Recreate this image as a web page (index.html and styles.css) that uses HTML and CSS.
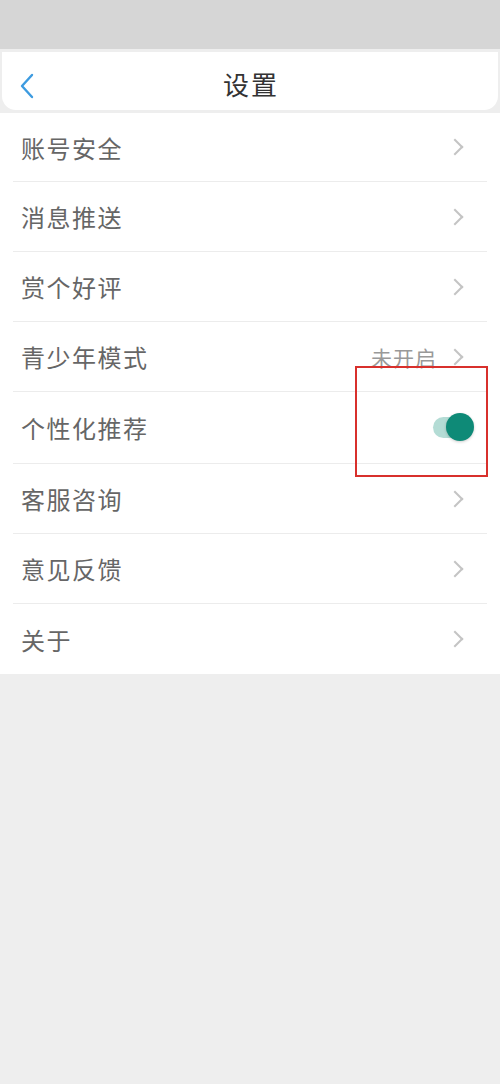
FILE: index.html
```html
<!DOCTYPE html>
<html lang="zh">
<head>
<meta charset="utf-8">
<title>设置</title>
<link rel="stylesheet" href="styles.css">
</head>
<body>
<div class="status"></div>
<header class="nav">
  <svg class="back" width="14" height="26" viewBox="0 0 14 26"><path d="M12 2 L2 13 L12 24" fill="none" stroke="#3d9be0" stroke-width="2.4" stroke-linecap="round" stroke-linejoin="round"/></svg>
  <h1 class="title">设置</h1>
</header>
<ul class="list">
  <li class="row"><span class="label">账号安全</span><span class="arrow"></span></li>
  <li class="row"><span class="label">消息推送</span><span class="arrow"></span></li>
  <li class="row"><span class="label">赏个好评</span><span class="arrow"></span></li>
  <li class="row"><span class="label">青少年模式</span><span class="right"><span class="value">未开启</span><span class="arrow"></span></span></li>
  <li class="row row-tall"><span class="label">个性化推荐</span><span class="switch"><span class="knob"></span></span><span class="mark"></span></li>
  <li class="row"><span class="label">客服咨询</span><span class="arrow"></span></li>
  <li class="row"><span class="label">意见反馈</span><span class="arrow"></span></li>
  <li class="row last"><span class="label">关于</span><span class="arrow"></span></li>
</ul>
</body>
</html>
```
FILE: styles.css
```css
* { box-sizing: border-box; }
html, body { margin: 0; padding: 0; }
body {
  width: 500px;
  height: 1084px;
  background: #eeeeee;
  font-family: "Noto Sans CJK SC", "Noto Sans", sans-serif;
  overflow: hidden;
}
.status {
  height: 49px;
  background: #d6d6d6;
}
.nav {
  margin: 3px 2px 0 2px;
  height: 58px;
  background: #ffffff;
  border-radius: 0 0 14px 14px;
  display: flex;
  align-items: center;
  justify-content: center;
  position: relative;
  padding-top: 6px;
}
.back {
  position: absolute;
  left: 18px;
  top: 21px;
}
.title {
  margin: 0;
  font-size: 26px;
  font-weight: 400;
  color: #333333;
  letter-spacing: 2px;
  line-height: 1;
  padding-left: 2px;
}
.list {
  list-style: none;
  margin: 3px 0 0 0;
  padding: 0 13px;
  background: #ffffff;
}
.row {
  height: 70px;
  display: flex;
  align-items: center;
  justify-content: space-between;
  border-bottom: 1px solid #ececec;
  padding: 0 24px 0 8px;
  position: relative;
}
.row:first-child { height: 69px; }
.row-tall { height: 72px; }
.row.last { border-bottom: none; }
.label {
  font-size: 24px;
  color: #666666;
  letter-spacing: 1.5px;
}
.right {
  display: flex;
  align-items: center;
  gap: 12px;
}
.value {
  font-size: 21px;
  color: #999999;
  letter-spacing: 1px;
}
.arrow {
  width: 12px;
  height: 12px;
  border-top: 2px solid #c4c4c4;
  border-right: 2px solid #c4c4c4;
  transform: rotate(45deg);
  margin-right: 2px;
}
.switch {
  width: 34px;
  height: 21px;
  border-radius: 11px;
  background: #b4dcd5;
  position: relative;
  margin-right: -4px;
}
.knob {
  position: absolute;
  right: -7px;
  top: -4px;
  width: 28px;
  height: 28px;
  border-radius: 50%;
  background: #0e8a77;
  box-shadow: 0 1px 3px rgba(0,0,0,0.2);
}
.mark {
  position: absolute;
  left: 342px;
  top: -26px;
  width: 133px;
  height: 111px;
  border: 2px solid #d8302c;
}
```
